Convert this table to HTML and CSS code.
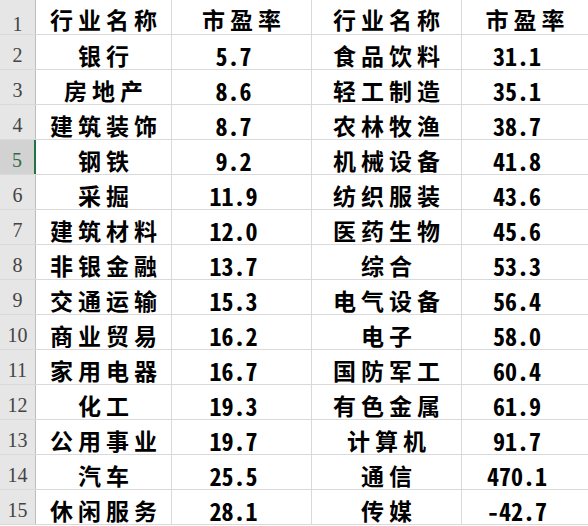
FILE: index.html
```html
<!DOCTYPE html>
<html lang="zh-CN">
<head>
<meta charset="utf-8">
<title>行业市盈率</title>
<link rel="stylesheet" href="styles.css">
</head>
<body>
<div class="sheet">
  <div class="rh first">1</div><div class="c t first">行业名称</div><div class="c t first">市盈率</div><div class="c t first">行业名称</div><div class="c t first">市盈率</div>
  <div class="rh">2</div><div class="c t">银行</div><div class="c n">5.7</div><div class="c t">食品饮料</div><div class="c n">31.1</div>
  <div class="rh">3</div><div class="c t">房地产</div><div class="c n">8.6</div><div class="c t">轻工制造</div><div class="c n">35.1</div>
  <div class="rh">4</div><div class="c t">建筑装饰</div><div class="c n">8.7</div><div class="c t">农林牧渔</div><div class="c n">38.7</div>
  <div class="rh sel">5</div><div class="c t">钢铁</div><div class="c n">9.2</div><div class="c t">机械设备</div><div class="c n">41.8</div>
  <div class="rh">6</div><div class="c t">采掘</div><div class="c n">11.9</div><div class="c t">纺织服装</div><div class="c n">43.6</div>
  <div class="rh">7</div><div class="c t">建筑材料</div><div class="c n">12.0</div><div class="c t">医药生物</div><div class="c n">45.6</div>
  <div class="rh">8</div><div class="c t">非银金融</div><div class="c n">13.7</div><div class="c t">综合</div><div class="c n">53.3</div>
  <div class="rh">9</div><div class="c t">交通运输</div><div class="c n">15.3</div><div class="c t">电气设备</div><div class="c n">56.4</div>
  <div class="rh">10</div><div class="c t">商业贸易</div><div class="c n">16.2</div><div class="c t">电子</div><div class="c n">58.0</div>
  <div class="rh">11</div><div class="c t">家用电器</div><div class="c n">16.7</div><div class="c t">国防军工</div><div class="c n">60.4</div>
  <div class="rh">12</div><div class="c t">化工</div><div class="c n">19.3</div><div class="c t">有色金属</div><div class="c n">61.9</div>
  <div class="rh">13</div><div class="c t">公用事业</div><div class="c n">19.7</div><div class="c t">计算机</div><div class="c n">91.7</div>
  <div class="rh">14</div><div class="c t">汽车</div><div class="c n">25.5</div><div class="c t">通信</div><div class="c n">470.1</div>
  <div class="rh">15</div><div class="c t">休闲服务</div><div class="c n">28.1</div><div class="c t">传媒</div><div class="c n">-42.7</div>
</div>
</body>
</html>
```
FILE: styles.css
```css
html, body {
  margin: 0;
  padding: 0;
  background: #ffffff;
}
.sheet {
  display: grid;
  grid-template-columns: 35px 135px 139px 149px 126px;
  grid-auto-rows: 34px;
  gap: 1px;
  background: #d9d9d9;
  width: 588px;
  border-bottom: 1px solid #d9d9d9;
}
.rh {
  background: #e6e6e6;
  color: #444444;
  font-family: "Liberation Serif", serif;
  font-size: 20px;
  display: flex;
  align-items: center;
  justify-content: center;
  padding-top: 6px;
  box-sizing: border-box;
  border-right: 1px solid #bdbdbd;
  margin-right: -1px;
  position: relative;
  z-index: 1;
}
.rh.first {
  padding-top: 14px;
}
.rh.sel {
  background: #d2d2d2;
  color: #2f6a48;
  border-right: 2px solid #217346;
}
.c {
  background: #ffffff;
  color: #000000;
  display: flex;
  align-items: center;
  justify-content: center;
  box-sizing: border-box;
  padding-top: 6px;
}
.c.first {
  padding-top: 3px;
}
.t {
  font-family: "Noto Sans CJK SC", sans-serif;
  font-size: 23px;
  font-weight: 600;
  letter-spacing: 5px;
  padding-left: 5px;
}
.n {
  font-family: "Noto Sans Mono CJK SC", "Noto Sans CJK SC", sans-serif;
  font-size: 24px;
  font-weight: 700;
  padding-right: 16px;
}
```
